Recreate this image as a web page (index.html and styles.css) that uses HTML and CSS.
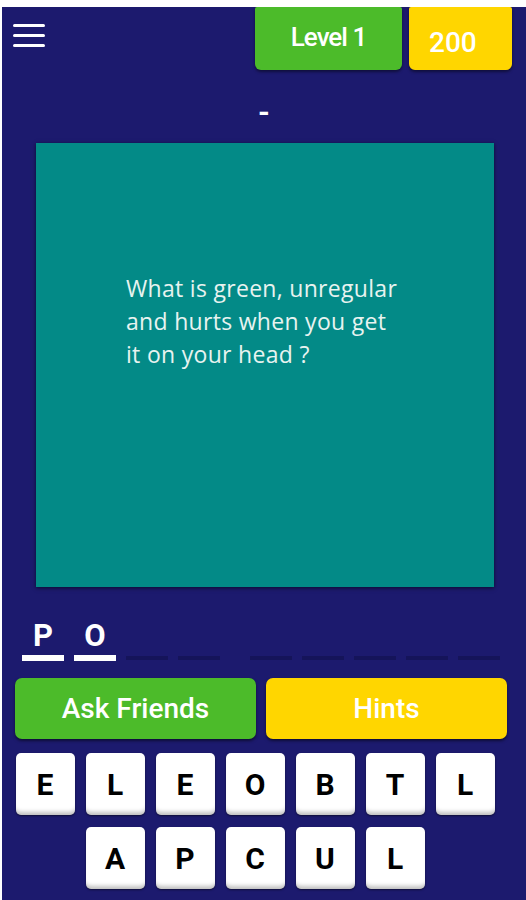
FILE: index.html
```html
<!DOCTYPE html>
<html lang="en">
<head>
    <meta charset="UTF-8">
    <meta name="viewport" content="width=device-width, initial-scale=1.0">
    <title>Riddle Quiz</title>
    <link rel="stylesheet" href="styles.css">
</head>
<body>
    <div class="app">
        <div class="header">
            <button class="menu" aria-label="Menu">
                <svg width="32" height="24" viewBox="0 0 32 24">
                    <rect x="0" y="0" width="32" height="3" rx="1.5" fill="#fff"/>
                    <rect x="0" y="10" width="32" height="3" rx="1.5" fill="#fff"/>
                    <rect x="0" y="20" width="32" height="3" rx="1.5" fill="#fff"/>
                </svg>
            </button>
            <div class="level">Level 1</div>
            <div class="coins">200</div>
        </div>

        <div class="subtitle">-</div>

        <div class="card">
            <p class="question">What is green, unregular<br>and hurts when you get<br>it on your head ?</p>
        </div>

        <div class="answer">
            <div class="word">
                <div class="slot filled"><span>P</span></div>
                <div class="slot filled"><span>O</span></div>
                <div class="slot"><span></span></div>
                <div class="slot"><span></span></div>
            </div>
            <div class="word">
                <div class="slot"><span></span></div>
                <div class="slot"><span></span></div>
                <div class="slot"><span></span></div>
                <div class="slot"><span></span></div>
                <div class="slot"><span></span></div>
            </div>
        </div>

        <div class="actions">
            <button class="btn green">Ask Friends</button>
            <button class="btn yellow">Hints</button>
        </div>

        <div class="keyboard">
            <div class="keys">
                <button class="key">E</button>
                <button class="key">L</button>
                <button class="key">E</button>
                <button class="key">O</button>
                <button class="key">B</button>
                <button class="key">T</button>
                <button class="key">L</button>
            </div>
            <div class="keys">
                <button class="key">A</button>
                <button class="key">P</button>
                <button class="key">C</button>
                <button class="key">U</button>
                <button class="key">L</button>
            </div>
        </div>
    </div>
</body>
</html>
```

FILE: styles.css
```css
body {
    margin: 0;
    background: #fff;
    font-family: Roboto, "Liberation Sans", sans-serif;
}
.app {
    margin: 7px 0 0 2px;
    height: 893px;
    background: #1c1a6e;
    overflow: hidden;
}
.header {
    display: flex;
    align-items: flex-start;
    padding: 0 14px 0 11px;
    height: 63px;
}
.menu {
    background: none;
    border: none;
    padding: 0;
    margin-top: 17px;
    width: 32px;
    height: 24px;
}
.level,
.coins {
    height: 63px;
    color: #fff;
    border-radius: 2px 2px 6px 6px;
    box-shadow: 0 2px 3px rgba(0, 0, 0, 0.45);
}
.level {
    margin-left: auto;
    width: 147px;
    background: #4cbb2a;
    font-size: 26px;
    font-weight: 500;
    letter-spacing: -1px;
    text-align: center;
    line-height: 60px;
}
.coins {
    margin-left: 7px;
    width: 103px;
    background: #ffd600;
    font-size: 28px;
    font-weight: 500;
    line-height: 72px;
    padding-left: 20px;
    box-sizing: border-box;
}
.subtitle {
    height: 73px;
    color: #fff;
    text-align: center;
    font-size: 30px;
    font-weight: bold;
    line-height: 84px;
}
.card {
    margin: 0 32px 0 34px;
    height: 444px;
    background: #038a87;
    box-shadow: 0 1px 4px rgba(0, 0, 0, 0.6);
}
.question {
    margin: 0;
    padding: 129px 0 0 90px;
    color: #e8f3f0;
    font-family: "Open Sans", sans-serif;
    font-size: 23px;
    letter-spacing: 0.3px;
    line-height: 33px;
}
.answer {
    display: flex;
    gap: 30px;
    padding: 31px 0 0 20px;
    height: 60px;
}
.word {
    display: flex;
    gap: 10px;
}
.slot {
    width: 42px;
    display: flex;
    flex-direction: column;
    align-items: center;
}
.slot span {
    height: 37px;
    color: #fff;
    font-size: 31px;
    font-weight: bold;
    line-height: 36px;
}
.slot::after {
    content: "";
    width: 100%;
    height: 4px;
    margin-top: 1px;
    background: #15145a;
}
.slot.filled::after {
    height: 6px;
    margin-top: 0;
    background: #fff;
}
.actions {
    display: flex;
    gap: 10px;
    padding: 0 19px 0 13px;
}
.btn {
    flex: 1;
    height: 61px;
    border: none;
    border-radius: 7px;
    color: #fff;
    font-family: Roboto, sans-serif;
    font-size: 28px;
    font-weight: 500;
    box-shadow: 0 2px 3px rgba(0, 0, 0, 0.5);
}
.green {
    background: #4cbb2a;
}
.yellow {
    background: #ffd600;
}
.keyboard {
    width: 480px;
    margin: 14px 0 0 13px;
    display: flex;
    flex-direction: column;
    gap: 12px;
}
.keys {
    display: flex;
    justify-content: center;
    gap: 11px;
}
.key {
    width: 59px;
    height: 62px;
    padding: 0;
    border: none;
    border-radius: 5px;
    background: #fff;
    color: #000;
    font-family: Roboto, sans-serif;
    font-size: 30px;
    font-weight: bold;
    box-shadow: inset 0 -6px 4px -3px rgba(0, 0, 0, 0.25), 0 1px 2px rgba(0, 0, 0, 0.5);
}
```
